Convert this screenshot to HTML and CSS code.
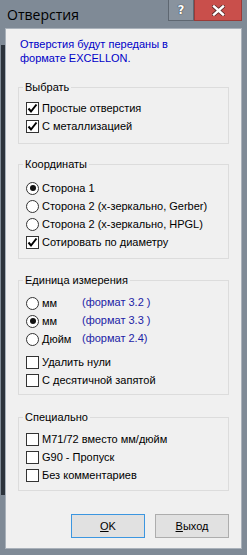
FILE: index.html
```html
<!doctype html>
<html lang="ru">
  <head>
    <meta charset="UTF-8" />
    <title>Отверстия</title>
    <link rel="stylesheet" href="styles.css">
  </head>

  <body>
    <div class="window">
      <div class="titlebar">
        <span class="title">Отверстия</span>
        <div class="caption">
          <button type="button" class="cap help">?</button>
          <button type="button" class="cap close">
            <svg width="13" height="11" viewBox="0 0 13 11">
              <path d="M2 1.5 L11 9.5 M11 1.5 L2 9.5" stroke="#5a2a2a" stroke-width="4" stroke-linecap="square" />
              <path d="M2 1.5 L11 9.5 M11 1.5 L2 9.5" stroke="#fff" stroke-width="2.4" stroke-linecap="square" />
            </svg>
          </button>
        </div>
      </div>

      <div class="client">
        <p class="intro">Отверстия будут переданы в<br>формате EXCELLON.</p>

        <fieldset class="group g-select">
          <legend>Выбрать</legend>
          <label class="row"><span class="box checked"></span>Простые отверстия</label>
          <label class="row"><span class="box checked"></span>С металлизацией</label>
        </fieldset>

        <fieldset class="group g-coords">
          <legend>Координаты</legend>
          <label class="row"><span class="radio checked"></span>Сторона 1</label>
          <label class="row"><span class="radio"></span>Сторона 2 (x-зеркально, Gerber)</label>
          <label class="row"><span class="radio"></span>Сторона 2 (x-зеркально, HPGL)</label>
          <label class="row"><span class="box checked"></span>Сотировать по диаметру</label>
        </fieldset>

        <fieldset class="group g-units">
          <legend>Единица измерения</legend>
          <label class="row"><span class="radio"></span><span class="unit">мм</span><span class="fmt">(формат 3.2 )</span></label>
          <label class="row"><span class="radio checked"></span><span class="unit">мм</span><span class="fmt">(формат 3.3 )</span></label>
          <label class="row"><span class="radio"></span><span class="unit">Дюйм</span><span class="fmt">(формат 2.4)</span></label>
          <label class="row sep"><span class="box"></span>Удалить нули</label>
          <label class="row"><span class="box"></span>С десятичной запятой</label>
        </fieldset>

        <fieldset class="group g-special">
          <legend>Специально</legend>
          <label class="row"><span class="box"></span>M71/72 вместо мм/дюйм</label>
          <label class="row"><span class="box"></span>G90 - Пропуск</label>
          <label class="row"><span class="box"></span>Без комментариев</label>
        </fieldset>

        <div class="actions">
          <button type="button" class="btn default"><u>O</u>K</button>
          <button type="button" class="btn"><u>В</u>ыход</button>
        </div>
      </div>
    </div>
  </body>
</html>
```

FILE: styles.css
```css
* {
  margin: 0;
  padding: 0;
  box-sizing: border-box;
}

body {
  background-color: #7f8a96;
  font-family: 'Liberation Sans', Arial, sans-serif;
  font-size: 11px;
  color: #000;
}

.window {
  width: 247px;
  height: 555px;
  display: flex;
  flex-direction: column;
  padding: 0 5px 6px 5px;
  background:
    linear-gradient(#2c333b, #2c333b) no-repeat 1px 45px / 4px 450px,
    #7f8a96;
}

.titlebar {
  height: 28px;
  display: flex;
  align-items: flex-start;
  justify-content: space-between;
}

.title {
  font-family: 'Open Sans', sans-serif;
  font-size: 14px;
  line-height: 20px;
  padding: 5px 0 0 2px;
}

.caption {
  display: flex;
}

.cap {
  height: 21px;
  border: 1px solid;
  border-top: none;
  display: flex;
  align-items: center;
  justify-content: center;
  cursor: pointer;
}

.cap.help {
  width: 26px;
  background-color: #89939e;
  border-color: #5e6771;
  color: #fff;
  font-family: 'DejaVu Sans', sans-serif;
  font-size: 12px;
  font-weight: 700;
  text-shadow: 0 0 1px #2b2f35, 0 0 1px #2b2f35;
}

.cap.close {
  width: 48px;
  background-color: #c94f4b;
  border-color: #9a3a37;
}

.client {
  flex: 1;
  display: flex;
  flex-direction: column;
  background-color: #f0f0f0;
  border: 1px solid #a9b1ba;
}

.intro {
  color: #0000c8;
  line-height: 14px;
  padding: 8px 0 0 14px;
}

.group {
  border: 1px solid #dcdcdc;
  margin: 15px 12px 0;
  padding: 5px 0 8px 7px;
}

.group legend {
  margin-left: -3px;
  padding: 0 2px;
  line-height: 14px;
}

.g-coords {
  margin-top: 13px;
  padding: 8px 0 7px 7px;
}

.g-units {
  margin-top: 14px;
  padding: 7px 0 5px 7px;
}

.g-special {
  margin-top: 15px;
  padding: 6px 0 6px 7px;
}

.row {
  display: flex;
  align-items: center;
  height: 18px;
}

.row.sep {
  margin-top: 5px;
}

.box,
.radio {
  flex: none;
  width: 13px;
  height: 13px;
  margin-right: 3px;
  border: 1px solid #333;
  background-color: #fff;
}

.box.checked {
  background: #fff url("data:image/svg+xml,%3Csvg xmlns='http://www.w3.org/2000/svg' width='11' height='11'%3E%3Cpath d='M1.5 5.5 L4 8.5 L9.5 1.5' fill='none' stroke='%23000' stroke-width='2'/%3E%3C/svg%3E") no-repeat center;
}

.radio {
  border-radius: 50%;
  display: flex;
  align-items: center;
  justify-content: center;
}

.radio.checked::after {
  content: '';
  width: 6px;
  height: 6px;
  border-radius: 50%;
  background-color: #111;
}

.unit {
  width: 40px;
}

.fmt {
  color: #1c1ca6;
  margin-top: -3px;
}

.actions {
  display: flex;
  justify-content: flex-end;
  gap: 10px;
  margin: 23px 12px 0 0;
}

.btn {
  width: 74px;
  height: 24px;
  border: 1px solid #adadad;
  background-color: #e1e1e1;
  font-family: inherit;
  font-size: 11px;
  color: #000;
  cursor: pointer;
}

.btn.default {
  border-color: #3c96e0;
}
```
